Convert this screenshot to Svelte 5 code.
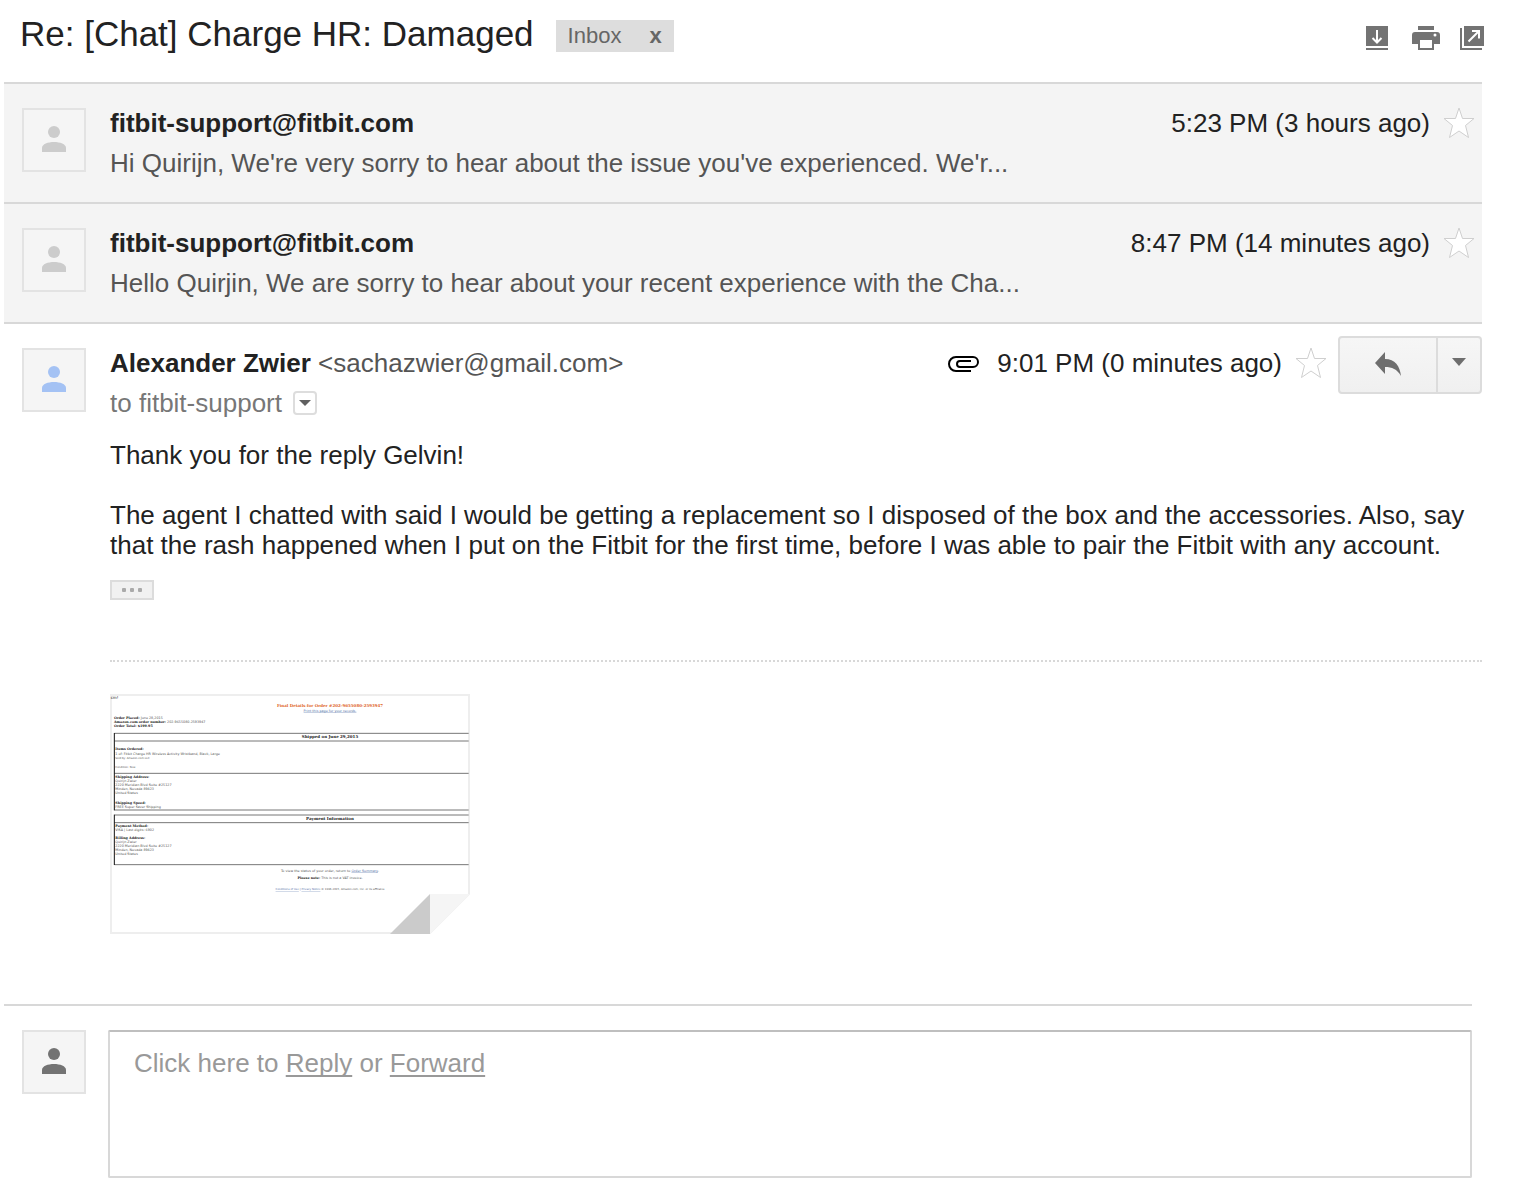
<script>
  const earlier = [
    {
      from: 'fitbit-support@fitbit.com',
      time: '5:23 PM (3 hours ago)',
      snippet: "Hi Quirijn, We're very sorry to hear about the issue you've experienced. We'r..."
    },
    {
      from: 'fitbit-support@fitbit.com',
      time: '8:47 PM (14 minutes ago)',
      snippet: 'Hello Quirjin, We are sorry to hear about your recent experience with the Cha...'
    }
  ];

  // Lines of the scanned order document: x, y, heading, text
  const docLines = [
    [12, 76, 'Order Placed:', 'June 28,2015'],
    [12, 88, 'Amazon.com order number:', '202-9655080-2593947'],
    [12, 100, 'Order Total: $199.95', ''],
    [16, 169, 'Items Ordered:', ''],
    [16, 183, '', '1 of: Fitbit Charge HR Wireless Activity Wristband, Black, Large'],
    [16, 251, 'Shipping Address:', ''],
    [16, 263, '', 'Quirijn Zwier'],
    [16, 275, '', '2220 Meridian Blvd Suite #25127'],
    [16, 287, '', 'Minden, Nevada 89423'],
    [16, 299, '', 'United States'],
    [16, 329, 'Shipping Speed:', ''],
    [16, 341, '', 'FREE Super Saver Shipping'],
    [16, 399, 'Payment Method:', ''],
    [16, 411, '', 'VISA | Last digits: 6902'],
    [16, 435, 'Billing Address:', ''],
    [16, 447, '', 'Quirijn Zwier'],
    [16, 459, '', '2220 Meridian Blvd Suite #25127'],
    [16, 471, '', 'Minden, Nevada 89423'],
    [16, 483, '', 'United States']
  ];
</script>

{#snippet avatar(tone)}
  <svg class="avatar {tone}" viewBox="0 0 64 64" aria-hidden="true">
    <rect class="frame" x="1" y="1" width="62" height="62" />
    <circle cx="32" cy="24" r="6" />
    <path d="M20 44v-4c0-4 6-6 12-6s12 2 12 6v4z" />
  </svg>
{/snippet}

{#snippet star()}
  <button class="plain star" aria-label="Star message">
    <svg width="32" height="32" viewBox="0 0 32 32">
      <path d="M16 1L19.500 11.500H31L22.500 18.500L25.500 30.500L16 24L6.500 30.500L9.500 18.500L1 11.500H12.500Z" fill="#fff" stroke="#cfcfcf" />
    </svg>
  </button>
{/snippet}

<main>
  <header>
    <h1>Re: [Chat] Charge HR: Damaged</h1>
    <span class="tag">Inbox <button class="plain" aria-label="Remove label Inbox">x</button></span>
    <div class="tools">
      <button class="plain" aria-label="Download">
        <svg width="26" height="24" viewBox="0 0 26 24">
          <path d="M0 0H22V20H0ZM0 22H22V24H0Z" fill="#737373" />
          <path d="M11 4V16M6.500 12L11 16.500L15.500 12" fill="none" stroke="#fff" stroke-width="2" />
        </svg>
      </button>
      <button class="plain" aria-label="Print">
        <svg width="28" height="24" viewBox="0 0 28 24">
          <path d="M6 0H22V4H6ZM3 6H25Q28 6 28 9V18H22V24H6V18H0V9Q0 6 3 6Z" fill="#737373" />
          <path d="M8 14H20V22H8Z" fill="#fff" />
          <circle cx="23" cy="9" r="1.500" fill="#fff" />
        </svg>
      </button>
      <button class="plain" aria-label="Open in new window">
        <svg width="24" height="24" viewBox="0 0 24 24">
          <path d="M4 0H24V20H4ZM0 2H2V22H22V24H0Z" fill="#737373" />
          <path d="M8.500 15.500L19 5M12 5H19V12.500" fill="none" stroke="#fff" stroke-width="2" />
        </svg>
      </button>
    </div>
  </header>

  {#each earlier as mail}
    <article class="mail collapsed">
      {@render avatar('light')}
      <div class="content">
        <div class="line">
          <b>{mail.from}</b>
          <div class="meta">
            <time>{mail.time}</time>
            {@render star()}
          </div>
        </div>
        <p class="snippet">{mail.snippet}</p>
      </div>
    </article>
  {/each}

  <article class="mail">
    {@render avatar('blue')}
    <div class="content">
      <div class="line">
        <span class="sender"><b>Alexander Zwier</b> &lt;sachazwier@gmail.com&gt;</span>
        <div class="meta">
          <svg class="clip" width="32" height="18" viewBox="0 0 32 18" aria-label="Has attachment" role="img">
            <path d="M24 17H9a7 7 0 0 1 0-14H26a5 5 0 0 1 0 10H13a3 3 0 0 1 0-6H24" fill="none" stroke="#000" stroke-width="2" />
          </svg>
          <time>9:01 PM (0 minutes ago)</time>
          {@render star()}
          <div class="split">
            <button class="reply" aria-label="Reply">
              <svg width="26" height="24" viewBox="0 0 26 24">
                <path d="M10 0V7C20 7 25 14 26 24C22 17 17 15 10 15V22L0 11Z" fill="#6e6e6e" />
              </svg>
            </button>
            <button class="more" aria-label="More">
              <svg width="14" height="8" viewBox="0 0 14 8"><path d="M0 0H14L7 8Z" fill="#6e6e6e" /></svg>
            </button>
          </div>
        </div>
      </div>
      <div class="to">
        to fitbit-support
        <button class="details" aria-label="Show details">
          <svg width="12" height="6" viewBox="0 0 12 6"><path d="M0 0H12L6 6Z" fill="#606060" /></svg>
        </button>
      </div>
      <div class="body">
        <p>Thank you for the reply Gelvin!</p>
        <p>
          The agent I chatted with said I would be getting a replacement so I disposed of the box and the accessories. Also, say
          that the rash happened when I put on the Fitbit for the first time, before I was able to pair the Fitbit with any account.
        </p>
      </div>
      <button class="trimmed" aria-label="Show trimmed content"><i></i><i></i><i></i></button>
      <div class="attachments">
        <svg class="thumb" viewBox="0 0 1080 720" role="img" aria-label="Order details attachment">
          <path d="M3 3H1077V600L960 717H3Z" fill="#fff" stroke="#eeeeee" stroke-width="6" />
          <text x="2" y="14" class="corner">cm!</text>
          <text x="660" y="40" class="title">Final Details for Order #202-9655080-2593947</text>
          <text x="660" y="53" class="link mid">Print this page for your records.</text>
          <g fill="none" stroke="#777" stroke-width="3">
            <path d="M13 118H1076M13 141H1076M13 238H1076M13 348H1076" />
            <path d="M13 363H1076M13 386H1076M13 512H1076" />
          </g>
          <path d="M13 117V349M13 362V513" fill="none" stroke="#111" stroke-width="3" />
          <text x="660" y="133" class="head">Shipped on June 29,2015</text>
          <text x="660" y="379" class="head">Payment Information</text>
          {#each docLines as [x, y, strong, text]}
            <text {x} {y}><tspan class="strong">{strong}</tspan> {text}</text>
          {/each}
          <text x="16" y="196" class="small">Sold by: Amazon.com LLC</text>
          <text x="16" y="221" class="small">Condition: New</text>
          <text x="660" y="533" class="mid">To view the status of your order, return to <tspan class="link">Order Summary</tspan>.</text>
          <text x="660" y="555" class="mid"><tspan class="strong">Please note:</tspan> This is not a VAT invoice.</text>
          <text x="660" y="588" class="mid small"><tspan class="link">Conditions of Use</tspan> | <tspan class="link">Privacy Notice</tspan> © 1996-2015, Amazon.com, Inc. or its affiliates</text>
          <path d="M960 600V720H840Z" fill="#cbcbcb" />
          <path d="M960 600H1080L960 720Z" fill="#f5f5f5" />
        </svg>
      </div>
    </div>
  </article>

  <footer>
    {@render avatar('dark')}
    <div class="box">Click here to <a href="#reply">Reply</a> or <a href="#forward">Forward</a></div>
  </footer>
</main>

<style>
  :global(body) {
    margin: 0;
    background: #fff;
  }
  main {
    font: 26px/40px "Liberation Sans", Arial, sans-serif;
    color: #222;
    padding: 0 42px 22px 4px;
  }
  h1, p {
    margin: 0;
    font-weight: normal;
  }
  button {
    font: inherit;
    color: inherit;
    padding: 0;
    box-sizing: border-box;
    cursor: pointer;
  }
  svg {
    display: block;
    flex: none;
  }
  .plain {
    border: 0;
    background: none;
  }
  header {
    display: flex;
    align-items: flex-start;
    height: 62px;
    padding: 20px 0 0 16px;
    margin-right: -2px;
  }
  h1 {
    font-size: 35px;
    line-height: 28px;
    margin-right: 22px;
  }
  .tag {
    display: flex;
    gap: 28px;
    padding: 0 12px;
    font-size: 22px;
    line-height: 32px;
    color: #666;
    background: #ddd;
  }
  .tag button {
    font-weight: bold;
  }
  .tools {
    display: flex;
    gap: 20px;
    margin: 6px 0 0 auto;
  }
  .mail {
    display: flex;
    gap: 24px;
    border-top: 2px solid #d8d8d8;
    padding: 19px 0 19px 18px;
  }
  .collapsed {
    background: #f4f4f4;
    padding-right: 7px;
  }
  .avatar {
    width: 64px;
    height: 64px;
    margin-top: 5px;
  }
  .frame {
    fill: #f5f5f5;
    stroke: #e3e3e3;
    stroke-width: 2;
  }
  .light { fill: #ccc; }
  .blue { fill: #a4c2f4; }
  .dark { fill: #737373; }
  .content {
    flex: 1;
    min-width: 0;
  }
  .line, .meta {
    display: flex;
    align-items: center;
    height: 40px;
  }
  .line {
    justify-content: space-between;
  }
  .star {
    margin-left: 13px;
  }
  .snippet, .sender {
    color: #555;
  }
  .sender b {
    color: #222;
  }
  .clip {
    margin-right: 18px;
  }
  .split {
    display: flex;
    height: 58px;
    margin: 4px 0 0 11px;
    box-sizing: border-box;
    border: 2px solid #dcdcdc;
    border-radius: 4px;
    background: linear-gradient(#f6f6f6, #f0f0f0);
  }
  .split button {
    display: flex;
    align-items: center;
    justify-content: center;
    border: 0;
    background: none;
    padding-bottom: 2px;
  }
  .reply {
    width: 96px;
  }
  .split .more {
    width: 44px;
    border-left: 2px solid #dcdcdc;
    padding-bottom: 6px;
  }
  .to {
    display: flex;
    align-items: center;
    gap: 11px;
    color: #777;
  }
  .details {
    display: grid;
    place-items: center;
    width: 24px;
    height: 24px;
    border: 2px solid #ddd;
    border-radius: 4px;
    background: #fff;
  }
  .body {
    margin-top: 17px;
    line-height: 30px;
  }
  .body p + p {
    margin-top: 30px;
  }
  .trimmed {
    display: flex;
    align-items: center;
    justify-content: center;
    gap: 4px;
    width: 44px;
    height: 20px;
    margin: 20px 0 60px;
    border: 2px solid #dcdcdc;
    background: #f1f1f1;
  }
  .trimmed i {
    width: 4px;
    height: 4px;
    border-radius: 1px;
    background: #aaa;
  }
  .attachments {
    border-top: 2px dotted #d8d8d8;
    padding: 32px 0 51px;
  }
  .thumb {
    width: 360px;
    height: 240px;
    font: 10px "DejaVu Sans", sans-serif;
    fill: #555;
  }
  .thumb .corner {
    font-size: 12px;
    fill: #111;
  }
  .thumb .strong {
    font-family: "DejaVu Serif", serif;
    font-weight: bold;
    fill: #222;
  }
  .thumb .small { font-size: 8px; }
  .thumb .mid, .title, .head { text-anchor: middle; }
  .title, .head {
    font: bold 12px "DejaVu Serif", serif;
  }
  .title { fill: #e0662a; }
  .head { fill: #222; }
  .link {
    fill: #5472a8;
    text-decoration: underline;
  }
  footer {
    display: flex;
    gap: 22px;
    margin-right: 10px;
    padding: 24px 0 0 18px;
    border-top: 2px solid #d8d8d8;
  }
  footer .avatar {
    margin-top: 0;
  }
  .box {
    flex: 1;
    min-height: 148px;
    box-sizing: border-box;
    padding: 11px 24px;
    border: 2px solid #d8d8d8;
    border-top-color: #bfbfbf;
    border-radius: 2px;
    color: #999;
  }
  .box a {
    color: inherit;
    text-decoration-thickness: 2px;
    text-underline-offset: 3px;
    text-decoration-skip-ink: none;
  }
</style>
